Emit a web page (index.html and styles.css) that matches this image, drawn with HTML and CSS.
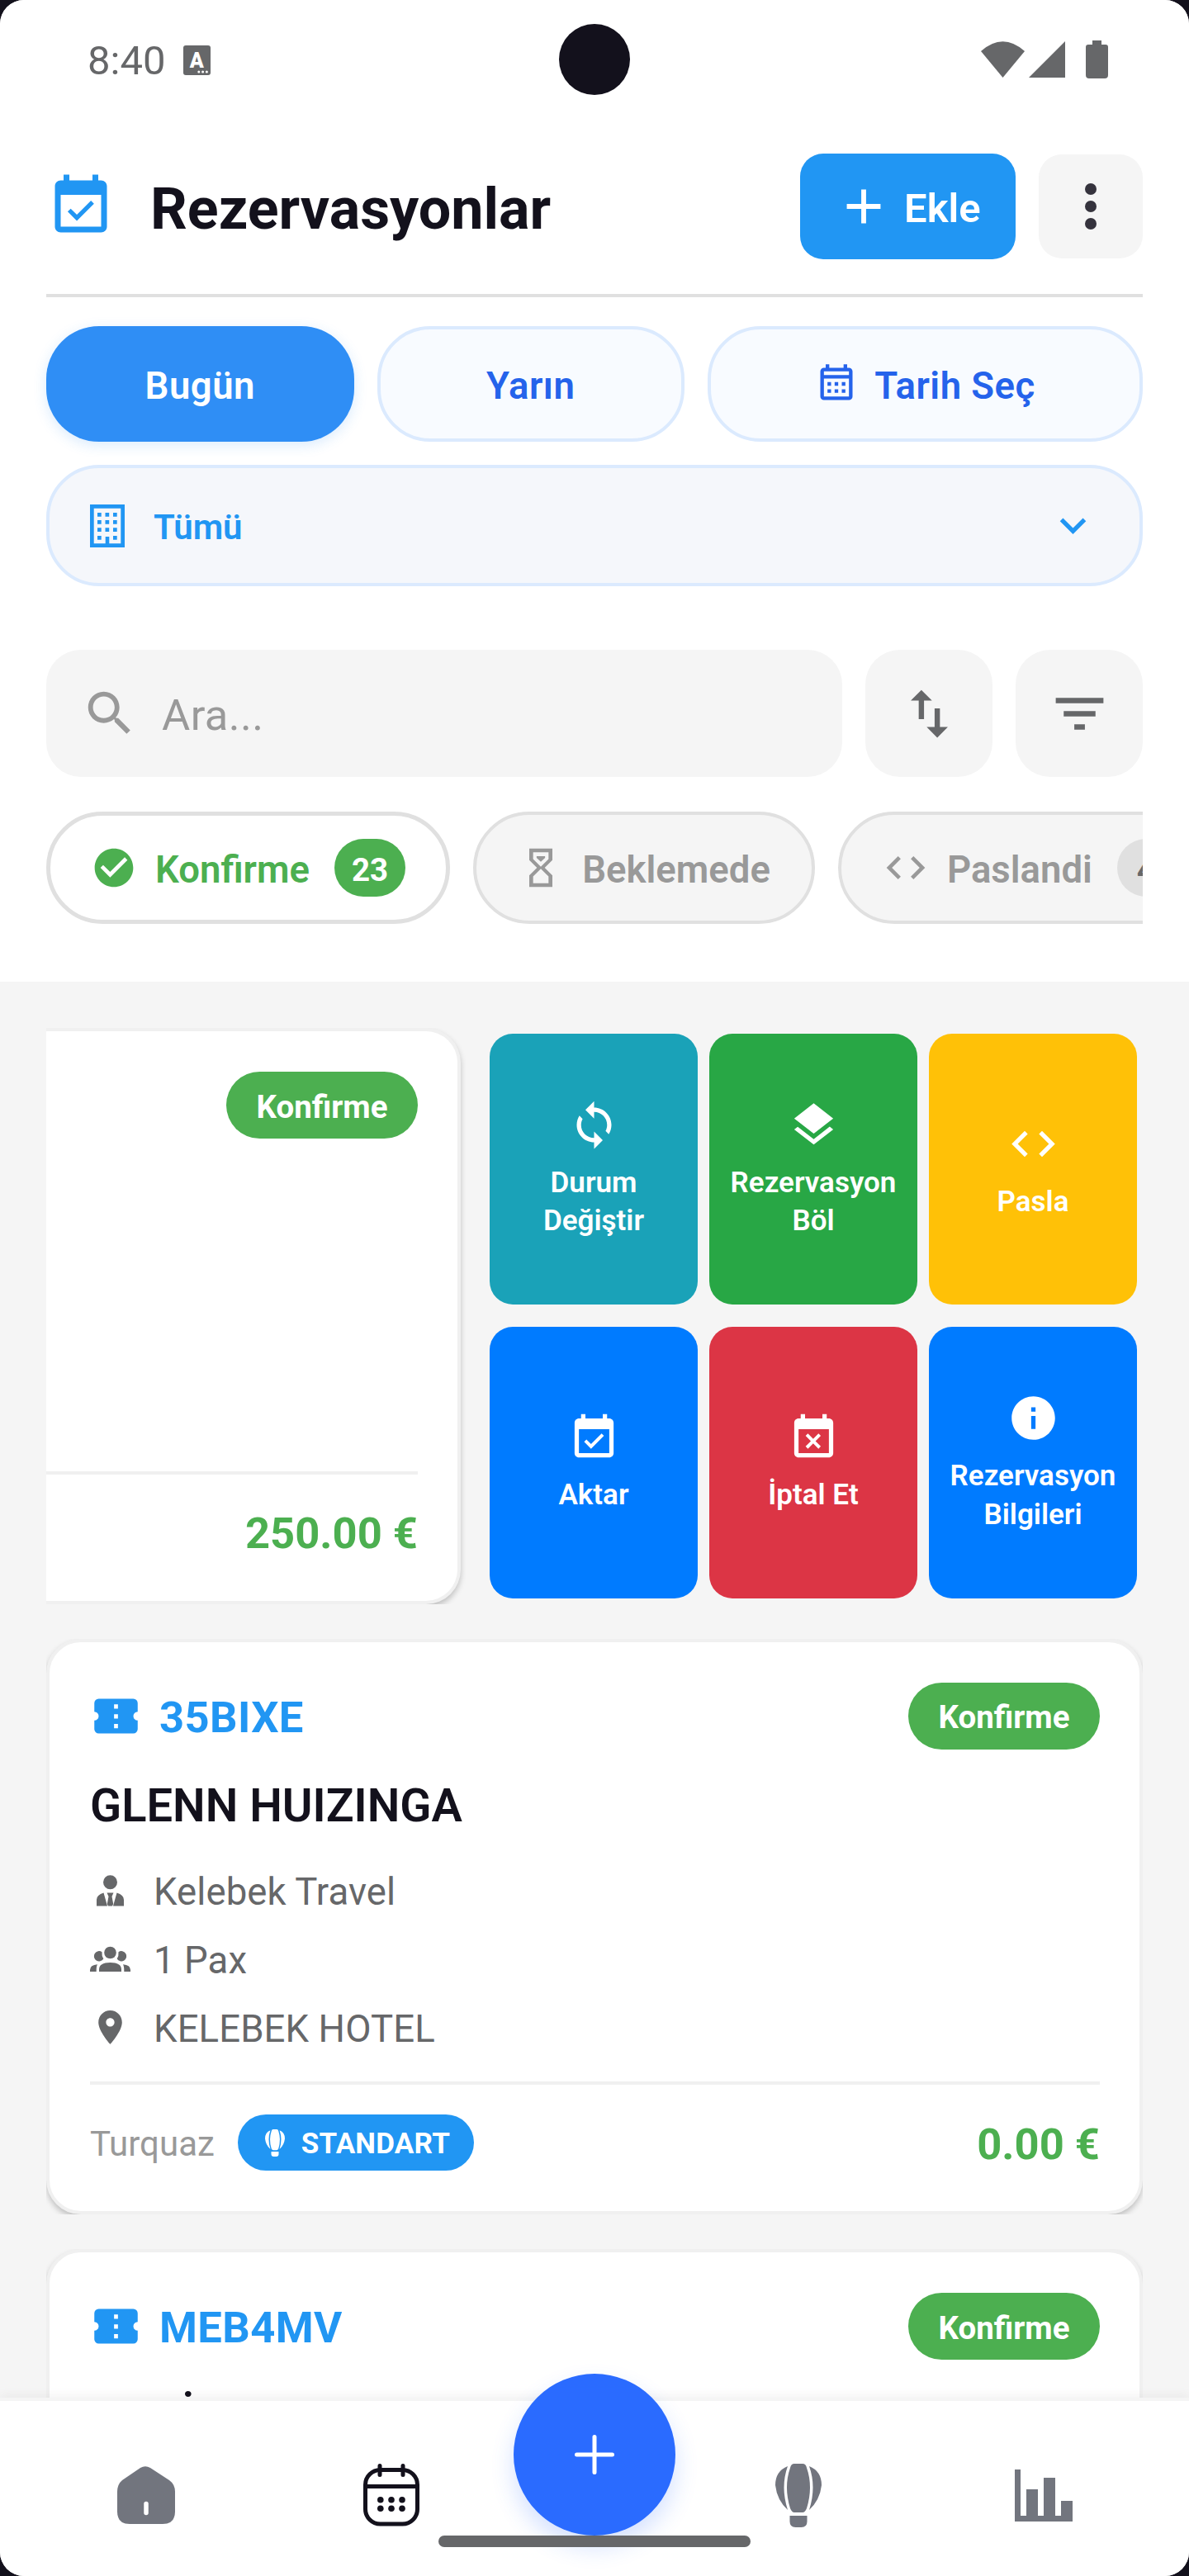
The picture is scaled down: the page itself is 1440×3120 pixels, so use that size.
FILE: index.html
```html
<!DOCTYPE html>
<html lang="en">
<head>
    <meta charset="UTF-8">
    <title>Rezervasyonlar</title>
    <link rel="stylesheet" href="styles.css">
</head>
<body>
    <!-- shared icons -->
    <svg class="sprite" width="0" height="0">
        <symbol id="event-ok" viewBox="0 0 24 24"><path d="M16.53 11.06L15.47 10l-4.88 4.88-2.12-2.12-1.06 1.06L10.59 17l5.94-5.94zM19 3h-1V1h-2v2H8V1H6v2H5c-1.11 0-1.99.9-1.99 2L3 19c0 1.1.89 2 2 2h14c1.1 0 2-.9 2-2V5c0-1.1-.9-2-2-2zm0 16H5V8h14v11z"/></symbol>
        <symbol id="event-busy" viewBox="0 0 24 24"><path d="M9.31 17l2.44-2.44L14.19 17l1.06-1.06-2.44-2.44 2.44-2.44L14.19 10l-2.44 2.44L9.31 10l-1.06 1.06 2.44 2.44-2.44 2.44L9.31 17zM19 3h-1V1h-2v2H8V1H6v2H5c-1.11 0-1.99.9-1.99 2L3 19c0 1.1.89 2 2 2h14c1.1 0 2-.9 2-2V5c0-1.1-.9-2-2-2zm0 16H5V8h14v11z"/></symbol>
        <symbol id="code" viewBox="0 0 24 24"><path d="M9.4 16.6L4.8 12l4.6-4.6L8 6l-6 6 6 6 1.4-1.4zm5.2 0l4.6-4.6-4.6-4.6L16 6l6 6-6 6-1.4-1.4z"/></symbol>
        <symbol id="ticket" viewBox="0 0 24 24"><path fill-rule="evenodd" d="M4 4h16a2 2 0 0 1 2 2v4a2 2 0 0 0 0 4v4a2 2 0 0 1-2 2H4a2 2 0 0 1-2-2v-4a2 2 0 0 0 0-4V6a2 2 0 0 1 2-2zm7.1 2.6v2h1.8v-2zm0 4.5v2h1.8v-2zm0 4.5v2h1.8v-2z"/></symbol>
        <symbol id="balloon" viewBox="0 0 56 77">
            <path d="M23 0H33Q37 0 38 5Q46 28 38 54Q36 59 33 59H23Q20 59 18 54Q10 28 18 5Q19 0 23 0z"/>
            <path d="M15 3Q0 9 0 26Q2 44 15 56Q6 28 15 3zM41 3Q56 9 56 26Q54 44 41 56Q50 28 41 3z"/>
            <path d="M17.5 63h21v7q0 7-7 7h-7q-7 0-7-7z"/>
        </symbol>
    </svg>

    <div class="phone">
        <div class="top">
            <div class="status">
                <div class="status-left">
                    <span class="txt">8:40</span>
                    <svg width="33" height="36" viewBox="0 0 33 36"><rect width="33" height="36" rx="3"/><text x="16.3" y="26.5" text-anchor="middle" class="lang-mark">A</text><g fill="#fff"><circle cx="18.8" cy="32" r="1.5"/><circle cx="23.6" cy="32" r="1.5"/><circle cx="28.4" cy="32" r="1.5"/></g></svg>
                </div>
                <div class="camera"></div>
                <div class="status-right">
                    <svg width="53" height="44" viewBox="0 0 53 44"><path d="M26.5 44L0 12Q26.5-11.5 53 12z"/></svg>
                    <svg width="44" height="44" viewBox="0 0 44 44"><path d="M0 44L44 0v44z"/></svg>
                    <svg class="battery" width="27" height="46" viewBox="0 0 27 46"><path d="M8 0h11v5h5q3 0 3 3v34q0 4-4 4H4q-4 0-4-4V8q0-3 3-3h5z"/></svg>
                </div>
            </div>

            <div class="header">
                <svg class="header-icon" width="84" height="84"><use href="#event-ok"/></svg>
                <h1 class="txt">Rezervasyonlar</h1>
                <button class="add-btn">
                    <svg width="70" height="70" viewBox="0 0 24 24"><path d="M19 13h-6v6h-2v-6H5v-2h6V5h2v6h6v2z"/></svg>
                    <span class="txt">Ekle</span>
                </button>
                <button class="menu-btn">
                    <svg width="84" height="84" viewBox="0 0 24 24"><circle cx="12" cy="6" r="2"/><circle cx="12" cy="12" r="2"/><circle cx="12" cy="18" r="2"/></svg>
                </button>
            </div>

            <div class="days">
                <button class="day active"><span class="txt">Bugün</span></button>
                <button class="day"><span class="txt">Yarın</span></button>
                <button class="day wide">
                    <svg width="52" height="52" viewBox="0 0 24 24"><path fill-rule="evenodd" d="M6 1h2v2h8V1h2v2h1a2 2 0 0 1 2 2v14a2 2 0 0 1-2 2H5a2 2 0 0 1-2-2V5a2 2 0 0 1 2-2h1zM5 5v2h14V5zm0 4v10h14V9zm2 2h2v2H7zm4 0h2v2h-2zm4 0h2v2h-2zm-8 4h2v2H7zm4 0h2v2h-2zm4 0h2v2h-2z"/></svg>
                    <span class="txt">Tarih Seç</span>
                </button>
            </div>

            <div class="select">
                <svg width="42" height="52" viewBox="0 0 42 52"><path fill-rule="evenodd" d="M0 0h42v52H0zM4.7 4.7v42.6h14V39h4.6v8.3h14V4.7z"/><path d="M9 10h4.7v4.7H9zm9.5 0h4.7v4.7h-4.7zm9.5 0h4.7v4.7H28zM9 19h4.7v4.7H9zm9.5 0h4.7v4.7h-4.7zm9.5 0h4.7v4.7H28zM9 28.2h4.7v4.7H9zm9.5 0h4.7v4.7h-4.7zm9.5 0h4.7v4.7H28zM9 38h4.7v4.7H9zm19 0h4.7v4.7H28z"/></svg>
                <span class="txt">Tümü</span>
                <svg class="chevron" width="63" height="63" viewBox="0 0 24 24"><path d="M7.41 8.59L12 13.17l4.59-4.58L18 10l-6 6-6-6z"/></svg>
            </div>

            <div class="search-row">
                <div class="search">
                    <svg width="70" height="70" viewBox="0 0 24 24"><path d="M15.5 14h-.79l-.28-.27C15.41 12.59 16 11.11 16 9.5 16 5.91 13.09 3 9.5 3S3 5.91 3 9.5 5.91 16 9.5 16c1.61 0 3.09-.59 4.23-1.57l.27.28v.79l5 4.99L20.49 19l-4.99-5zm-6 0C7.01 14 5 11.99 5 9.5S7.01 5 9.5 5 14 7.01 14 9.5 11.99 14 9.5 14z"/></svg>
                    <span class="txt">Ara...</span>
                </div>
                <button class="tool"><svg width="77" height="77" viewBox="0 0 24 24"><path d="M16 17.01V10h-2v7.01h-3L15 21l4-3.99h-3zM9 3L5 6.99h3V14h2V6.99h3L9 3z"/></svg></button>
                <button class="tool"><svg width="77" height="77" viewBox="0 0 24 24"><path d="M10 18h4v-2h-4v2zM3 6v2h18V6H3zm3 7h12v-2H6v2z"/></svg></button>
            </div>

            <div class="chips">
                <div class="chip selected">
                    <svg width="56" height="56" viewBox="0 0 24 24"><path d="M12 2C6.48 2 2 6.48 2 12s4.48 10 10 10 10-4.48 10-10S17.52 2 12 2zm-2 15l-5-5 1.41-1.41L10 14.17l7.59-7.59L19 8l-9 9z"/></svg>
                    <span class="txt">Konfirme</span>
                    <b class="count"><span class="txt">23</span></b>
                </div>
                <div class="chip">
                    <svg width="56" height="56" viewBox="0 0 24 24"><path fill-rule="evenodd" d="M6 2v6l4 4-4 4v6h12v-6l-4-4 4-4V2zm10 14.5V20H8v-3.5l4-4zm-4-5l-4-4V4h8v3.5zM9.8 6h4.4v.9L12 8.9 9.8 6.9z"/></svg>
                    <span class="txt">Beklemede</span>
                </div>
                <div class="chip">
                    <svg width="56" height="56"><use href="#code"/></svg>
                    <span class="txt">Paslandi</span>
                    <b class="count"><span class="txt">4</span></b>
                </div>
            </div>
        </div>

        <div class="list">
            <div class="item">
                <div class="card swiped">
                    <div class="card-head"><span class="badge"><span class="txt">Konfirme</span></span></div>
                    <div class="card-foot"><span class="price txt">250.00 €</span></div>
                </div>
                <div class="actions">
                    <div class="action teal">
                        <svg width="63" height="63" viewBox="0 0 24 24"><path d="M12 4V1L8 5l4 4V6c3.31 0 6 2.69 6 6 0 1.01-.25 1.97-.7 2.8l1.46 1.46C19.54 15.03 20 13.57 20 12c0-4.42-3.58-8-8-8zm0 14c-3.31 0-6-2.69-6-6 0-1.01.25-1.97.7-2.8L5.24 7.74C4.46 8.97 4 10.43 4 12c0 4.42 3.58 8 8 8v3l4-4-4-4v3z"/></svg>
                        <span class="txt">Durum Değiştir</span>
                    </div>
                    <div class="action green">
                        <svg width="63" height="63" viewBox="0 0 24 24"><path d="M11.99 18.54l-7.37-5.73L3 14.07l9 7 9-7-1.63-1.27-7.38 5.74zM12 16l7.36-5.73L21 9l-9-7-9 7 1.63 1.27L12 16z"/></svg>
                        <span class="txt">Rezervasyon Böl</span>
                    </div>
                    <div class="action yellow">
                        <svg width="63" height="63"><use href="#code"/></svg>
                        <span class="txt">Pasla</span>
                    </div>
                    <div class="action blue">
                        <svg width="63" height="63"><use href="#event-ok"/></svg>
                        <span class="txt">Aktar</span>
                    </div>
                    <div class="action red">
                        <svg width="63" height="63"><use href="#event-busy"/></svg>
                        <span class="txt">İptal Et</span>
                    </div>
                    <div class="action blue">
                        <svg width="63" height="63" viewBox="0 0 24 24"><path d="M12 2C6.48 2 2 6.48 2 12s4.48 10 10 10 10-4.48 10-10S17.52 2 12 2zm1 15h-2v-6h2v6zm0-8h-2V7h2v2z"/></svg>
                        <span class="txt">Rezervasyon Bilgileri</span>
                    </div>
                </div>
            </div>

            <div class="item">
                <div class="card">
                    <div class="card-head">
                        <svg width="63" height="63"><use href="#ticket"/></svg>
                        <span class="code txt">35BIXE</span>
                        <span class="badge"><span class="txt">Konfirme</span></span>
                    </div>
                    <div class="name txt">GLENN HUIZINGA</div>
                    <div class="info">
                        <div class="info-row">
                            <svg width="49" height="49" viewBox="0 0 49 49"><circle cx="24.5" cy="14.8" r="8.5"/><path d="M8 43.5V36q0-6 8.5-8.5L21 43.5zM41 43.5V36q0-6-8.5-8.5L28 43.5zM20.5 27.5h8L26.5 32l1.7 9-1.2 2.5h-5L20.8 41l1.7-9z"/></svg>
                            <span class="txt">Kelebek Travel</span>
                        </div>
                        <div class="info-row">
                            <svg width="49" height="49" viewBox="0 0 49 49"><circle cx="24.5" cy="17" r="7.3"/><path d="M11 40v-2.5q0-8.5 13.5-8.5T38 37.5V40zM0 40v-2q0-6 9-6.8Q7.5 34 7.7 40zM49 40v-2q0-6-9-6.8 1.5 2.8 1.3 8.8zM14.5 16.2q-.5 5 1.8 8.3a6.2 6.2 0 1 1-1.8-8.3zM34.5 16.2q.5 5-1.8 8.3a6.2 6.2 0 1 0 1.8-8.3z"/></svg>
                            <span class="txt">1 Pax</span>
                        </div>
                        <div class="info-row">
                            <svg width="49" height="49" viewBox="0 0 24 24"><path d="M12 2C8.13 2 5 5.13 5 9c0 5.25 7 13 7 13s7-7.75 7-13c0-3.87-3.13-7-7-7zm0 9.5c-1.38 0-2.5-1.12-2.5-2.5s1.12-2.5 2.5-2.5 2.5 1.12 2.5 2.5-1.12 2.5-2.5 2.5z"/></svg>
                            <span class="txt">KELEBEK HOTEL</span>
                        </div>
                    </div>
                    <div class="card-foot">
                        <span class="company txt">Turquaz</span>
                        <span class="type"><svg width="24" height="33"><use href="#balloon"/></svg><span class="txt">STANDART</span></span>
                        <span class="price txt">0.00 €</span>
                    </div>
                </div>
            </div>

            <div class="item">
                <div class="card">
                    <div class="card-head">
                        <svg width="63" height="63"><use href="#ticket"/></svg>
                        <span class="code txt">MEB4MV</span>
                        <span class="badge"><span class="txt">Konfirme</span></span>
                    </div>
                    <div class="name txt">MELİS YALDIRAN SU</div>
                </div>
            </div>
        </div>

        <div class="nav">
            <div class="nav-item"><svg width="70" height="70" viewBox="0 0 70 70"><path d="M28 2Q34-1.5 40 2L63 17Q70 22 70 31V55Q70 70 55 70H15Q0 70 0 55V31Q0 22 6 17z"/><path d="M35 45.5V56.5" stroke="#fff" stroke-width="5.5" stroke-linecap="round"/></svg></div>
            <div class="nav-item current"><svg width="68" height="76" viewBox="0 0 68 76"><g fill="none" stroke="#13111c" stroke-width="5"><rect x="2.5" y="7.5" width="63" height="65.5" rx="18"/><path d="M2.5 27.5h63"/><path d="M20 2.5v11M48 2.5v11" stroke-linecap="round"/></g><circle cx="20.8" cy="43.7" r="3.8"/><circle cx="34" cy="43.7" r="3.8"/><circle cx="47" cy="43.7" r="3.8"/><circle cx="20.8" cy="54.2" r="3.8"/><circle cx="34" cy="54.2" r="3.8"/><circle cx="47" cy="54.2" r="3.8"/></svg></div>
            <div class="fab"><svg width="48" height="48" viewBox="0 0 48 48"><path d="M24 2.5v43M2.5 24h43"/></svg></div>
            <div class="nav-item"><svg width="56" height="77"><use href="#balloon"/></svg></div>
            <div class="nav-item"><svg width="70" height="63" viewBox="0 0 70 63"><path d="M0 0h7v56h7V24h14v32h7V10h14v46h7V38h14v25H0z"/></svg></div>
            <div class="home-bar"></div>
        </div>
    </div>
</body>
</html>
```
FILE: styles.css
```css
* {
    box-sizing: border-box;
}
body {
    margin: 0;
    background: #13111c;
    font-family: Roboto, "Liberation Sans", sans-serif;
    color: #13111c;
}
button {
    border: 0;
    padding: 0;
    font: inherit;
    color: inherit;
}
svg {
    display: block;
    flex: none;
    fill: currentColor;
}
.sprite {
    position: absolute;
}
/* text box with the extra room above the line */
.txt {
    display: block;
    line-height: 1.327;
    padding-top: .05em;
    margin: 0 0 -.05em;
    white-space: nowrap;
}
.phone {
    display: flex;
    flex-direction: column;
    height: 3120px;
    overflow: hidden;
    border-radius: 29px;
    background: #f5f5f5;
}
.top {
    flex: none;
    height: 1189px;
    padding: 0 56px;
    background: #fff;
}

/* status bar */
.status {
    display: grid;
    grid-template-columns: 1fr auto 1fr;
    align-items: center;
    height: 144px;
    margin: 0 42px 0 50px;
    color: #666769;
}
.status-left {
    display: flex;
    align-items: center;
    gap: 22px;
    font-size: 49px;
}
.status-left .txt {
    padding-top: 0;
}
.status-left svg {
    margin-top: 2px;
}
.lang-mark {
    fill: #fff;
    font-size: 25px;
    font-weight: 900;
}
.camera {
    width: 86px;
    height: 86px;
    border-radius: 50%;
    background: #13111c;
    margin-left: -8px;
}
.status-right {
    display: flex;
    align-items: center;
    justify-content: flex-end;
    gap: 5px;
}
.battery {
    margin-left: 20px;
}

/* header */
.header {
    display: flex;
    align-items: center;
    height: 216px;
    border-bottom: 4px solid #e0e0e0;
}
.header-icon {
    color: #2196f3;
}
.header h1 {
    flex: 1;
    margin-left: 42px;
    font-size: 70px;
    font-weight: 700;
}
.add-btn {
    display: flex;
    align-items: center;
    width: 261px;
    height: 128px;
    padding-left: 42px;
    gap: 14px;
    border-radius: 28px;
    background: #2196f3;
    color: #fff;
    font-size: 49px;
    font-weight: 600;
}
.menu-btn {
    width: 126px;
    height: 126px;
    margin-left: 28px;
    padding: 0 21px;
    border-radius: 28px;
    background: #f5f5f5;
    color: #35333d;
}

/* day filter */
.days {
    display: flex;
    gap: 28px;
    margin-top: 35px;
}
.day {
    display: flex;
    align-items: center;
    justify-content: center;
    gap: 20px;
    width: 372.5px;
    height: 140px;
    border: 4px solid #dbeafe;
    border-radius: 64px;
    background: #f8fbff;
    color: #2563eb;
    font-size: 45.5px;
    font-weight: 600;
    letter-spacing: .5px;
}
.day .txt {
    padding-top: .08em;
}
.day.active {
    border: 0;
    background: #2f8ef5;
    color: #fff;
    box-shadow: 0 4px 16px rgba(47, 142, 245, .18);
}
.day.wide {
    flex: 1;
}
.select {
    display: flex;
    align-items: center;
    height: 147px;
    margin-top: 28px;
    padding: 0 49px;
    border: 4px solid #dbeafe;
    border-radius: 64px;
    background: #f5f7fb;
    color: #2196f3;
    font-size: 42px;
    font-weight: 600;
}
.select .txt {
    margin-left: 35px;
}
.chevron {
    margin-left: auto;
}

/* search */
.search-row {
    display: flex;
    gap: 28px;
    margin-top: 77px;
}
.search {
    display: flex;
    flex: 1;
    align-items: center;
    gap: 28px;
    padding-left: 42px;
    border-radius: 42px;
    background: #f5f5f5;
    color: #999;
    font-size: 52.5px;
    letter-spacing: .4px;
}
.tool {
    display: flex;
    align-items: center;
    justify-content: center;
    width: 154px;
    height: 154px;
    border-radius: 42px;
    background: #f5f5f5;
    color: #666769;
}

/* status chips */
.chips {
    display: flex;
    gap: 28px;
    margin-top: 42px;
    overflow: hidden;
}
.chip {
    display: flex;
    flex: none;
    align-items: center;
    gap: 22px;
    height: 136px;
    padding: 0 50px;
    border: 4px solid #e0e0e0;
    border-radius: 68px;
    background: #f5f5f5;
    color: #999;
    font-size: 45.5px;
    font-weight: 600;
}
.chip .txt {
    padding-top: .08em;
}
.chip.selected {
    padding: 0 49px;
    border-width: 5px;
    background: #fff;
    color: #4caf50;
}
.count {
    display: flex;
    align-items: center;
    justify-content: center;
    min-width: 70px;
    height: 70px;
    margin-left: 8px;
    padding: 0 21px;
    border-radius: 35px;
    background: #e0e0e0;
    color: #666769;
    font-size: 38.5px;
    font-weight: 700;
}
.chip.selected .count {
    background: #4caf50;
    color: #fff;
}

/* list */
.list {
    flex: 1;
    min-height: 0;
    padding: 56px 56px 0;
    overflow: hidden;
}
.item {
    display: flex;
    height: 697.5px;
    margin-bottom: 42px;
    overflow: hidden;
}
.card {
    display: flex;
    flex: 1;
    flex-direction: column;
    padding: 49px 48px 48px 49px;
    border: 4px solid #f0f0f0;
    border-radius: 42px;
    background: #fff;
    box-shadow: 0 4px 7px rgba(0, 0, 0, .22);
}
.card.swiped {
    flex: 0 0 502px;
    padding-left: 0;
    border-left: 0;
    border-radius: 0 42px 42px 0;
}
.card-head {
    display: flex;
    flex: none;
    align-items: center;
    height: 81px;
    color: #2196f3;
}
.code {
    margin-left: 21px;
    font-size: 52.5px;
    font-weight: 700;
    letter-spacing: .4px;
}
.badge {
    display: flex;
    align-items: center;
    justify-content: center;
    width: 232px;
    height: 81px;
    margin-left: auto;
    border-radius: 41px;
    background: #4caf50;
    color: #fff;
    font-size: 38.5px;
    font-weight: 700;
}
.name {
    margin-top: 29px;
    font-size: 56px;
    font-weight: 600;
}
.info {
    display: flex;
    flex-direction: column;
    gap: 21px;
    margin-top: 37px;
    color: #666769;
    font-size: 45.5px;
    letter-spacing: .1px;
}
.info-row {
    display: flex;
    align-items: center;
    gap: 28px;
    height: 62px;
}
.card-foot {
    display: flex;
    align-items: center;
    height: 109px;
    margin-top: auto;
    padding-top: 35px;
    border-top: 4px solid #f0f0f0;
}
.company {
    color: #999;
    font-size: 42px;
}
.type {
    display: flex;
    align-items: center;
    gap: 20px;
    width: 286px;
    height: 68px;
    margin-left: 28px;
    padding-left: 33px;
    border-radius: 34px;
    background: #2196f3;
    color: #fff;
    font-size: 35px;
    font-weight: 700;
    letter-spacing: .2px;
}
.price {
    margin-left: auto;
    color: #4caf50;
    font-size: 52.5px;
    font-weight: 700;
}

/* swipe actions */
.actions {
    display: grid;
    grid-template-columns: repeat(3, 252px);
    grid-template-rows: 1fr 1fr;
    gap: 27px 14px;
    margin-left: 35px;
    padding: 7px 0;
}
.action {
    display: flex;
    flex-direction: column;
    align-items: center;
    justify-content: center;
    gap: 14px;
    padding: 0 14px;
    border-radius: 28px;
    color: #fff;
    font-size: 35px;
    font-weight: 600;
    text-align: center;
}
.action .txt {
    white-space: normal;
}
.teal { background: #1aa2b8; }
.green { background: #28a745; }
.yellow { background: #ffc107; }
.blue { background: #007bff; }
.red { background: #dc3545; }

/* bottom navigation */
.nav {
    position: relative;
    display: flex;
    flex: none;
    height: 216px;
    padding: 0 28px;
    border-top: 4px solid #f5f5f5;
    background: #fff;
    color: #72757e;
    box-shadow: 0 -3px 12px rgba(0, 0, 0, .05);
}
.nav-item {
    display: flex;
    flex: 1;
    align-items: center;
    justify-content: center;
    height: 228px;
}
.nav-item.current {
    color: #13111c;
}
.fab {
    display: flex;
    align-items: center;
    justify-content: center;
    width: 196px;
    height: 196px;
    margin-top: -33px;
    border-radius: 50%;
    background: #2a6bff;
    box-shadow: 0 14px 28px rgba(42, 107, 255, .2);
}
.fab svg {
    fill: none;
    stroke: #fff;
    stroke-width: 5;
    stroke-linecap: round;
}
.home-bar {
    position: absolute;
    left: 531px;
    bottom: 35px;
    width: 378px;
    height: 14px;
    border-radius: 7px;
    background: #666769;
}
```
